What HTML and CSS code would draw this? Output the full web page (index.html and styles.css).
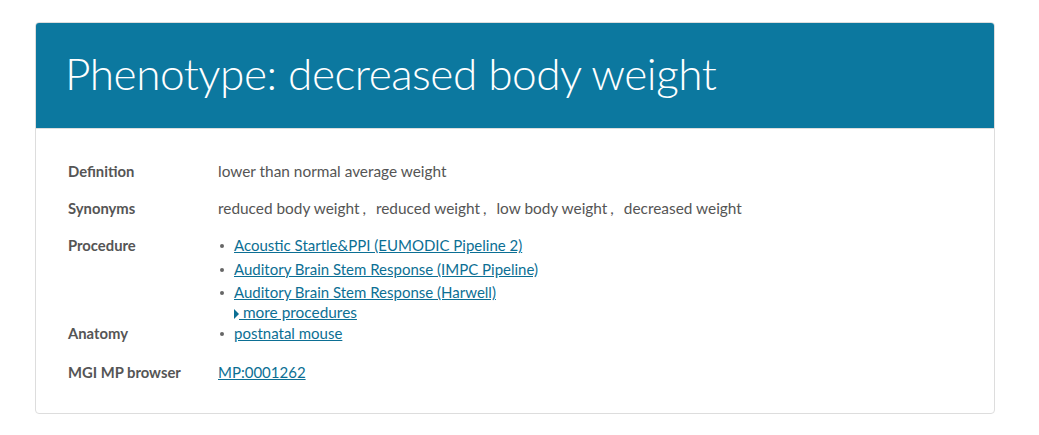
FILE: index.html
```html
<!DOCTYPE html>
<html>
<head>
<meta charset="utf-8">
<link rel="stylesheet" href="styles.css">
</head>
<body>
<div class="page">
  <section class="panel">
    <header class="panel-head">
      <h1 class="title">Phenotype: decreased body weight</h1>
    </header>
    <div class="panel-body">
      <dl class="details">
        <dt class="label row-def">Definition</dt>
        <dd class="value row-def">lower than normal average weight</dd>

        <dt class="label row-syn">Synonyms</dt>
        <dd class="value row-syn">reduced body weight<span class="sep">,</span>reduced weight<span class="sep">,</span>low body weight<span class="sep">,</span>decreased weight</dd>

        <dt class="label row-proc">Procedure</dt>
        <dd class="value row-proc">
          <ul class="bullets">
            <li><a href="#">Acoustic Startle&amp;PPI (EUMODIC Pipeline 2)</a></li>
            <li><a href="#">Auditory Brain Stem Response (IMPC Pipeline)</a></li>
            <li><a href="#">Auditory Brain Stem Response (Harwell)</a></li>
          </ul>
          <a href="#" class="more"><span class="caret"></span> more procedures</a>
        </dd>

        <dt class="label row-anat">Anatomy</dt>
        <dd class="value row-anat">
          <ul class="bullets">
            <li><a href="#">postnatal mouse</a></li>
          </ul>
        </dd>

        <dt class="label row-mgi">MGI MP browser</dt>
        <dd class="value row-mgi"><a href="#">MP:0001262</a></dd>
      </dl>
    </div>
  </section>
</div>
</body>
</html>
```
FILE: styles.css
```css
html, body {
  margin: 0;
  padding: 0;
  background: #ffffff;
}
body {
  font-family: Lato, "Open Sans", "Liberation Sans", sans-serif;
  color: #555555;
  font-size: 15.4px;
}
.page {
  padding: 22px 44px 0 35px;
}
.panel {
  width: 958px;
  border: 1px solid #dddddd;
  border-radius: 4px;
  overflow: hidden;
}
.panel-head {
  background: #0c789f;
  height: 105px;
  padding: 0 29px;
  display: flex;
  align-items: center;
}
.title {
  margin: 0;
  font-weight: 300;
  font-size: 44.2px;
  color: #ffffff;
  letter-spacing: -0.5px;
  line-height: 1;
  padding-bottom: 4px;
}
.panel-body {
  border-top: 1px solid #dddddd;
  padding: 32px 32px 31px 32px;
}
.details {
  margin: 0;
  display: grid;
  grid-template-columns: 150px 1fr;
  line-height: 20px;
}
.label {
  font-weight: bold;
  font-size: 14.8px;
  color: #555555;
  margin: 0;
}
.value {
  margin: 0;
}
.row-def, .row-syn {
  margin-bottom: 17px;
}
.row-proc {
  margin-bottom: 1px;
}
.row-anat {
  margin-bottom: 19px;
}
.sep {
  margin: 0 10px 0 3px;
}
.bullets {
  margin: 0;
  padding: 0 0 0 16px;
  list-style: none;
}
.bullets li {
  position: relative;
  line-height: 20px;
  margin-bottom: 3.5px;
}
.bullets li:last-child {
  margin-bottom: 0;
}
.bullets li::before {
  content: "";
  position: absolute;
  left: -14px;
  top: 9px;
  width: 4px;
  height: 4px;
  border-radius: 50%;
  background: #666666;
}
a {
  color: #0c6f94;
  text-decoration: underline;
  font-size: 15px;
}
.more {
  display: inline-block;
  margin-left: 16px;
  line-height: 20px;
  font-size: 15.4px;
}
.caret {
  display: inline-block;
  width: 0;
  height: 0;
  border-top: 5px solid transparent;
  border-bottom: 5px solid transparent;
  border-left: 5px solid #0c6f94;
  vertical-align: -1px;
}
```
